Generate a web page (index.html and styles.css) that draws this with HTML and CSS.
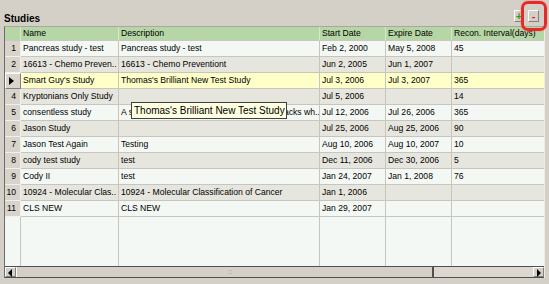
FILE: index.html
```html
<!DOCTYPE html>
<html lang="en">
<head>
  <meta charset="UTF-8" />
  <title>Studies</title>
  <link rel="stylesheet" href="styles.css">
</head>
<body>

  <div class="panel">
    <div class="toolbar">
      <span class="title">Studies</span>
      <div class="tool-buttons">
        <button class="tool add">+</button>
        <button class="tool remove">-</button>
      </div>
    </div>

    <div class="grid">
      <div class="row head">
        <div class="cell num"></div>
        <div class="cell">Name</div>
        <div class="cell">Description</div>
        <div class="cell">Start Date</div>
        <div class="cell">Expire Date</div>
        <div class="cell">Recon. Interval(days)</div>
      </div>
      <div class="row light">
        <div class="cell num">1</div>
        <div class="cell">Pancreas study - test</div>
        <div class="cell">Pancreas study - test</div>
        <div class="cell">Feb 2, 2000</div>
        <div class="cell">May 5, 2008</div>
        <div class="cell">45</div>
      </div>
      <div class="row dark">
        <div class="cell num">2</div>
        <div class="cell">16613 - Chemo Preven..</div>
        <div class="cell">16613 - Chemo Preventiont</div>
        <div class="cell">Jun 2, 2005</div>
        <div class="cell">Jun 1, 2007</div>
        <div class="cell"></div>
      </div>
      <div class="row selected">
        <div class="cell num"><span class="marker"></span></div>
        <div class="cell">Smart Guy's Study</div>
        <div class="cell">Thomas's Brilliant New Test Study</div>
        <div class="cell">Jul 3, 2006</div>
        <div class="cell">Jul 3, 2007</div>
        <div class="cell">365</div>
      </div>
      <div class="row dark">
        <div class="cell num">4</div>
        <div class="cell">Kryptonians Only Study</div>
        <div class="cell"></div>
        <div class="cell">Jul 5, 2006</div>
        <div class="cell"></div>
        <div class="cell">14</div>
      </div>
      <div class="row light">
        <div class="cell num">5</div>
        <div class="cell">consentless study</div>
        <div class="cell">A study to test the consentless specimen tracks wh..</div>
        <div class="cell">Jul 12, 2006</div>
        <div class="cell">Jul 26, 2006</div>
        <div class="cell">365</div>
      </div>
      <div class="row dark">
        <div class="cell num">6</div>
        <div class="cell">Jason Study</div>
        <div class="cell"></div>
        <div class="cell">Jul 25, 2006</div>
        <div class="cell">Aug 25, 2006</div>
        <div class="cell">90</div>
      </div>
      <div class="row light">
        <div class="cell num">7</div>
        <div class="cell">Jason Test Again</div>
        <div class="cell">Testing</div>
        <div class="cell">Aug 10, 2006</div>
        <div class="cell">Aug 10, 2007</div>
        <div class="cell">10</div>
      </div>
      <div class="row dark">
        <div class="cell num">8</div>
        <div class="cell">cody test study</div>
        <div class="cell">test</div>
        <div class="cell">Dec 11, 2006</div>
        <div class="cell">Dec 30, 2006</div>
        <div class="cell">5</div>
      </div>
      <div class="row light">
        <div class="cell num">9</div>
        <div class="cell">Cody II</div>
        <div class="cell">test</div>
        <div class="cell">Jan 24, 2007</div>
        <div class="cell">Jan 1, 2008</div>
        <div class="cell">76</div>
      </div>
      <div class="row dark">
        <div class="cell num">10</div>
        <div class="cell">10924 - Molecular Clas..</div>
        <div class="cell">10924 - Molecular Classification of Cancer</div>
        <div class="cell">Jan 1, 2006</div>
        <div class="cell"></div>
        <div class="cell"></div>
      </div>
      <div class="row light">
        <div class="cell num">11</div>
        <div class="cell">CLS NEW</div>
        <div class="cell">CLS NEW</div>
        <div class="cell">Jan 29, 2007</div>
        <div class="cell"></div>
        <div class="cell"></div>
      </div>
      <div class="row filler">
        <div class="cell num"></div>
        <div class="cell"></div>
        <div class="cell"></div>
        <div class="cell"></div>
        <div class="cell"></div>
        <div class="cell"></div>
      </div>

      <div class="hscroll">
        <div class="arrow left"><span></span></div>
        <div class="thumb"><span class="grip">::</span></div>
        <div class="track"></div>
        <div class="arrow right"><span></span></div>
      </div>
    </div>

    <div class="tooltip">Thomas's Brilliant New Test Study</div>
    <div class="highlight"></div>
  </div>

</body>
</html>
```

FILE: styles.css
```css
* { margin: 0; padding: 0; box-sizing: border-box; }

body {
  background: #d4d0c8;
  font-family: "Liberation Sans", Arial, sans-serif;
  font-size: 8.6px;
  color: #000;
  width: 549px;
  height: 284px;
  overflow: hidden;
}

.panel {
  position: relative;
  padding: 0 4px;
}

.toolbar {
  height: 26px;
  display: flex;
  justify-content: space-between;
  align-items: flex-end;
}

.title {
  font-weight: bold;
  font-size: 10px;
  line-height: 12px;
  padding-bottom: 1px;
}

.tool-buttons {
  display: flex;
  gap: 4px;
  margin-bottom: 4px;
  margin-right: 6px;
}

.tool {
  width: 10px;
  height: 12px;
  border: 1px solid;
  border-color: #fff #808080 #808080 #fff;
  background: #d4d0c8;
  font-family: "Liberation Sans", Arial, sans-serif;
  font-weight: bold;
  font-size: 11px;
  line-height: 9px;
  text-align: center;
}

.tool.add { color: #1ca51c; }
.tool.remove { color: #e02020; width: 11px; }

.grid {
  width: 541px;
  border-left: 1px solid #6c6c6c;
  border-top: 1px solid #a8a8a0;
  border-right: 1px solid #ecece8;
}

.row {
  display: grid;
  grid-template-columns: 16px 98px 201px 66px 66px 1fr;
  height: 16px;
}

.cell {
  border-right: 1px solid #c6c6be;
  border-bottom: 1px solid #c6c6be;
  padding-left: 2px;
  line-height: 15px;
  white-space: nowrap;
  overflow: hidden;
}

.cell:last-child { border-right: none; }

.row.head {
  height: 14px;
  background: #b6d6a6;
}

.row.head .cell {
  line-height: 13px;
  border-color: #d6e8cc;
  border-bottom-color: #c8c8c0;
}

.row.light { background: #f4f8f4; }
.row.dark { background: #e6e6de; }
.row.selected { background: #ffffc8; }

.num {
  background: #d8d4cc;
  text-align: right;
  padding: 0 4px 0 0;
  border-color: #f0f0ec;
}

.row.head .num { background: #b6d6a6; }

.row.selected .num {
  border: 1px solid;
  border-color: #fff #808080 #808080 #fff;
  position: relative;
}

.marker {
  position: absolute;
  left: 3px;
  top: 3px;
  border-left: 5px solid #000;
  border-top: 4px solid transparent;
  border-bottom: 4px solid transparent;
}

.row.filler {
  height: 49px;
  background: #f4f8f4;
}

.row.filler .cell { border-bottom: none; }
.row.filler .num { background: #f4f8f4; border-color: #c6c6be; }

.hscroll {
  height: 12px;
  display: flex;
  border-top: 1px solid #505050;
  border-bottom: 1px solid #505050;
  background: #d4d0c8;
}

.arrow {
  width: 11px;
  border: 1px solid;
  border-color: #fff #808080 #808080 #fff;
  position: relative;
}

.arrow span {
  position: absolute;
  top: 1px;
  border-top: 4px solid transparent;
  border-bottom: 4px solid transparent;
}

.arrow.left span { left: 2px; border-right: 4px solid #000; }
.arrow.right span { left: 3px; border-left: 4px solid #000; }

.thumb {
  width: 418px;
  border-right: 2px solid #505050;
  border-left: 1px solid #fff;
  text-align: right;
  padding-right: 200px;
  font-size: 7px;
  line-height: 9px;
  color: #909090;
}

.track {
  flex: 1;
  background: #dcd8d0;
}

.tooltip {
  position: absolute;
  left: 131px;
  top: 102px;
  width: 156px;
  height: 17px;
  background: #ffffe1;
  border: 1px solid #404040;
  font-size: 10px;
  line-height: 15px;
  padding-left: 2px;
  white-space: nowrap;
}

.highlight {
  position: absolute;
  left: 521px;
  top: 1px;
  width: 26px;
  height: 30px;
  border: 3px solid #e62a26;
  border-radius: 7px;
  box-shadow: 0 0 2px #f08080;
}
```
